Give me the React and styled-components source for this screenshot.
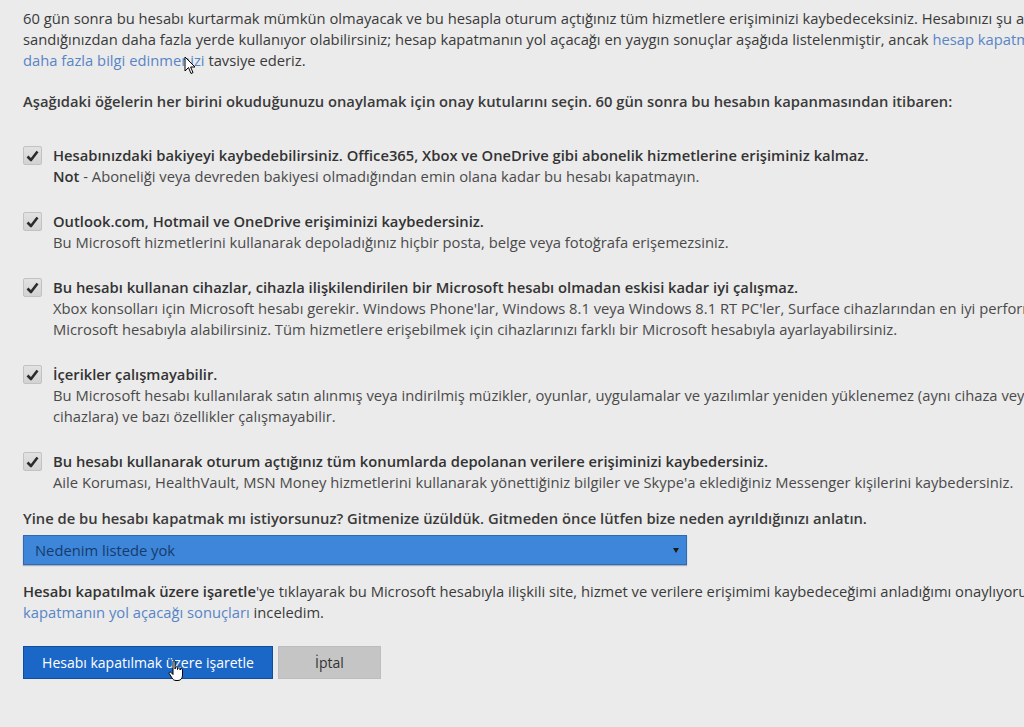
import styled, { createGlobalStyle } from "styled-components";

const GlobalStyle = createGlobalStyle`
  html, body {
    margin: 0;
    padding: 0;
    background: #ebebeb;
    overflow: hidden;
  }
  body {
    font-family: "Open Sans", "Noto Sans", "Liberation Sans", sans-serif;
    font-size: 14.75px;
    color: #3a3a3a;
  }
`;

const Page = styled.div`
  width: 1024px;
  height: 727px;
  overflow: hidden;
  padding: 8px 0 0 23px;
  box-sizing: border-box;
  position: relative;
`;

const Para = styled.p`
  margin: 0;
  line-height: 21px;
  white-space: nowrap;
`;

const Heading = styled.p`
  margin: 20px 0 0 0;
  line-height: 21px;
  font-weight: 600;
  white-space: nowrap;
`;

const Link = styled.a`
  color: #5885c6;
  text-decoration: none;
`;

const List = styled.div`
  display: flex;
  flex-direction: column;
  gap: 24px;
  margin-top: 33px;
`;

const Item = styled.div`
  display: flex;
  gap: 11px;
`;

const Box = styled.div`
  width: 17px;
  height: 17px;
  margin-top: 1px;
  flex-shrink: 0;
  border: 1px solid #c2c2c2;
  border-radius: 2px;
  background: linear-gradient(#e2e2e2, #d2d2d2);
  display: flex;
  align-items: center;
  justify-content: center;
`;

const ItemBody = styled.div`
  line-height: 21px;
  white-space: nowrap;
`;

const Title = styled.div`
  font-weight: 600;
  color: #333;
`;

const Sub = styled.div`
  color: #4a4a4a;
`;

const Question = styled.p`
  margin: 15px 0 0 0;
  line-height: 21px;
  font-weight: 600;
  white-space: nowrap;
`;

const Select = styled.div`
  margin-top: 6px;
  width: 664px;
  height: 30px;
  box-sizing: border-box;
  background: #3d86da;
  border: 1px solid #2d6ab5;
  box-shadow: 0 1px 1px rgba(0, 0, 0, 0.25);
  display: flex;
  align-items: center;
  justify-content: space-between;
  padding: 0 7px 0 11px;
  color: #173b6a;
`;

const Arrow = styled.span`
  width: 0;
  height: 0;
  border-left: 3px solid transparent;
  border-right: 3px solid transparent;
  border-top: 5px solid #1b1b1b;
`;

const Confirm = styled.div`
  margin-top: 16px;
  line-height: 20.5px;
  white-space: nowrap;
`;

const Strong = styled.span`
  font-weight: 600;
  color: #333;
`;

const Buttons = styled.div`
  display: flex;
  gap: 5px;
  margin-top: 24px;
`;

const Button = styled.button`
  height: 33px;
  width: ${(p) => p.$w}px;
  border: 1px solid ${(p) => (p.$primary ? "#0f4e9e" : "#bdbdbd")};
  background: ${(p) => (p.$primary ? "#1b67c8" : "#c5c5c5")};
  color: ${(p) => (p.$primary ? "#fff" : "#333")};
  font-family: inherit;
  font-size: 14px;
  padding: 0;
  cursor: pointer;
`;

const Cursor = styled.svg`
  position: absolute;
  left: ${(p) => p.$x}px;
  top: ${(p) => p.$y}px;
`;

const Check = () => (
  <svg width="13" height="12" viewBox="0 0 13 12">
    <path d="M1.5 6.5 L5 10 L11.5 1.5" fill="none" stroke="#2b2b2b" strokeWidth="2.6" strokeLinejoin="round" />
  </svg>
);

const items = [
  {
    title: "Hesabınızdaki bakiyeyi kaybedebilirsiniz. Office365, Xbox ve OneDrive gibi abonelik hizmetlerine erişiminiz kalmaz.",
    lines: [
      <>
        <Strong>Not</Strong> - Aboneliği veya devreden bakiyesi olmadığından emin olana kadar bu hesabı kapatmayın.
      </>,
    ],
  },
  {
    title: "Outlook.com, Hotmail ve OneDrive erişiminizi kaybedersiniz.",
    lines: ["Bu Microsoft hizmetlerini kullanarak depoladığınız hiçbir posta, belge veya fotoğrafa erişemezsiniz."],
  },
  {
    title: "Bu hesabı kullanan cihazlar, cihazla ilişkilendirilen bir Microsoft hesabı olmadan eskisi kadar iyi çalışmaz.",
    lines: [
      "Xbox konsolları için Microsoft hesabı gerekir. Windows Phone'lar, Windows 8.1 veya Windows 8.1 RT PC'ler, Surface cihazlarından en iyi performansı",
      "Microsoft hesabıyla alabilirsiniz. Tüm hizmetlere erişebilmek için cihazlarınızı farklı bir Microsoft hesabıyla ayarlayabilirsiniz.",
    ],
  },
  {
    title: "İçerikler çalışmayabilir.",
    lines: [
      "Bu Microsoft hesabı kullanılarak satın alınmış veya indirilmiş müzikler, oyunlar, uygulamalar ve yazılımlar yeniden yüklenemez (aynı cihaza veya başka",
      "cihazlara) ve bazı özellikler çalışmayabilir.",
    ],
  },
  {
    title: "Bu hesabı kullanarak oturum açtığınız tüm konumlarda depolanan verilere erişiminizi kaybedersiniz.",
    lines: ["Aile Koruması, HealthVault, MSN Money hizmetlerini kullanarak yönettiğiniz bilgiler ve Skype'a eklediğiniz Messenger kişilerini kaybedersiniz."],
  },
];

export default function App() {
  return (
    <>
      <GlobalStyle />
      <Page>
        <Para>
          60 gün sonra bu hesabı kurtarmak mümkün olmayacak ve bu hesapla oturum açtığınız tüm hizmetlere erişiminizi kaybedeceksiniz. Hesabınızı şu anda
          <br />
          sandığınızdan daha fazla yerde kullanıyor olabilirsiniz; hesap kapatmanın yol açacağı en yaygın sonuçlar aşağıda listelenmiştir, ancak{" "}
          <Link>hesap kapatmanın sonuçları hakkında</Link>
          <br />
          <Link>daha fazla bilgi edinmenizi</Link> tavsiye ederiz.
        </Para>
        <Heading>
          Aşağıdaki öğelerin her birini okuduğunuzu onaylamak için onay kutularını seçin. 60 gün sonra bu hesabın kapanmasından itibaren:
        </Heading>
        <List>
          {items.map((it, i) => (
            <Item key={i}>
              <Box>
                <Check />
              </Box>
              <ItemBody>
                <Title>{it.title}</Title>
                {it.lines.map((l, j) => (
                  <Sub key={j}>{l}</Sub>
                ))}
              </ItemBody>
            </Item>
          ))}
        </List>
        <Question>
          Yine de bu hesabı kapatmak mı istiyorsunuz? Gitmenize üzüldük. Gitmeden önce lütfen bize neden ayrıldığınızı anlatın.
        </Question>
        <Select>
          <span>Nedenim listede yok</span>
          <Arrow />
        </Select>
        <Confirm>
          <Strong>Hesabı kapatılmak üzere işaretle</Strong>'ye tıklayarak bu Microsoft hesabıyla ilişkili site, hizmet ve verilere erişimimi kaybedeceğimi anladığımı onaylıyorum ve hesap
          <br />
          <Link>kapatmanın yol açacağı sonuçları</Link> inceledim.
        </Confirm>
        <Buttons>
          <Button $primary $w={250}>Hesabı kapatılmak üzere işaretle</Button>
          <Button $w={103}>İptal</Button>
        </Buttons>
        <Cursor $x={184} $y={56} width="12" height="19" viewBox="0 0 12 19">
          <path d="M1 1 L1 15 L4.5 11.5 L7 17.5 L9 16.6 L6.6 11 L11 11 Z" fill="#fff" stroke="#000" strokeWidth="1" strokeLinejoin="round" />
        </Cursor>
        <Cursor $x={168} $y={660} width="17" height="22" viewBox="0 0 17 22">
          <path d="M5 1.5 C5 0.7 7 0.7 7 1.5 L7 9 L7.5 7.5 C7.5 6.7 9.5 6.7 9.5 7.5 L9.5 9.5 L10 8.3 C10 7.6 12 7.6 12 8.3 L12 10 L12.5 9.3 C12.5 8.6 14.5 8.6 14.5 9.3 L14.5 15 C14.5 18 13 20.5 10 20.5 L8 20.5 C6 20.5 5 19.5 4 18 L1.2 13.5 C0.6 12.5 2 11.5 2.8 12.3 L5 14.5 Z" fill="#fff" stroke="#000" strokeWidth="1" strokeLinejoin="round" />
        </Cursor>
      </Page>
    </>
  );
}
